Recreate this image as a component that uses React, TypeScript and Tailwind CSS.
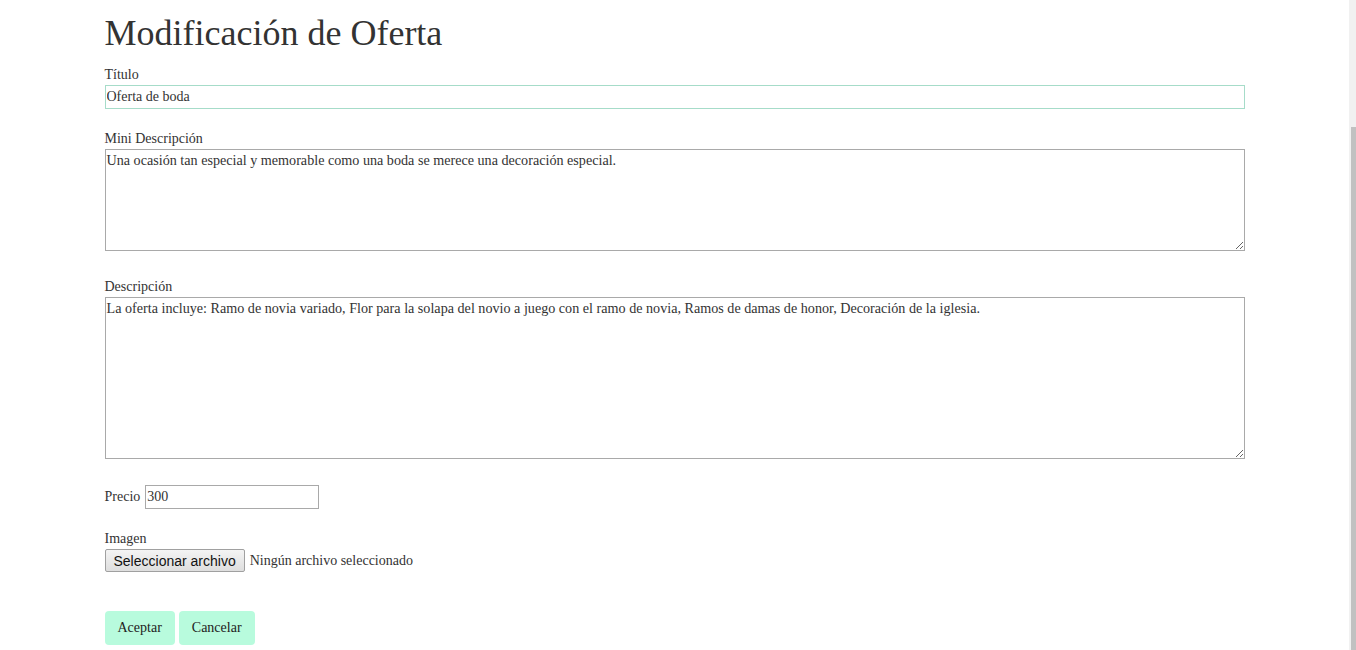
export default function App() {
  return (
    <div className="relative min-h-[650px] w-[1349px] bg-white font-['Liberation_Serif',serif] text-[14px] leading-[20px] text-[#333]">
      <div className="mx-auto w-[1140px] pt-[13px]">
        <h1 className="m-0 text-[36px] leading-[40px] font-normal text-[#333]">Modificación de Oferta</h1>

        <div className="mt-[12px]">
          <label className="block">Título</label>
          <input
            type="text"
            defaultValue="Oferta de boda"
            className="block h-[24px] w-full border border-[#a6dcc9] px-[1px] text-[14px] outline-none"
          />
        </div>

        <div className="mt-[20px]">
          <label className="block">Mini Descripción</label>
          <textarea
            defaultValue="Una ocasión tan especial y memorable como una boda se merece una decoración especial."
            className="block h-[102px] w-full border border-[#a9a9a9] px-[1px] py-0 text-[14.15px] leading-[20px] outline-none"
          />
        </div>

        <div className="mt-[26px]">
          <label className="block">Descripción</label>
          <textarea
            defaultValue="La oferta incluye: Ramo de novia variado, Flor para la solapa del novio a juego con el ramo de novia, Ramos de damas de honor, Decoración de la iglesia."
            className="block h-[162px] w-full border border-[#a9a9a9] px-[1px] py-0 text-[14.15px] leading-[20px] outline-none"
          />
        </div>

        <div className="mt-[26px] flex items-center gap-[5px]">
          <label>Precio</label>
          <input
            type="text"
            defaultValue="300"
            className="h-[24px] w-[174px] border border-[#a9a9a9] px-[1px] text-[14px] outline-none"
          />
        </div>

        <div className="mt-[20px]">
          <label className="block">Imagen</label>
          <div className="flex items-center gap-[5px]">
            <button
              type="button"
              className="h-[23px] rounded-[2px] border border-[#a0a0a0] bg-gradient-to-b from-[#f4f4f4] to-[#dedede] px-[8px] font-['Liberation_Sans',sans-serif] text-[14px] leading-[20px] text-[#111]"
            >
              Seleccionar archivo
            </button>
            <span>Ningún archivo seleccionado</span>
          </div>
        </div>

        <div className="mt-[39px] flex gap-[4px]">
          <button type="button" className="rounded-[4px] bg-[#b8fbdd] px-[13px] py-[7px] text-[14px] leading-[20px] text-[#222]">
            Aceptar
          </button>
          <button type="button" className="rounded-[4px] bg-[#b8fbdd] px-[13px] py-[7px] text-[14px] leading-[20px] text-[#222]">
            Cancelar
          </button>
        </div>
      </div>

      <div className="fixed top-0 right-0 h-[650px] w-[7px] bg-[#f1f1f1]">
        <div className="mt-[127px] ml-[2px] h-[523px] w-[5px] bg-[#c1c1c1]" />
      </div>
    </div>
  );
}
